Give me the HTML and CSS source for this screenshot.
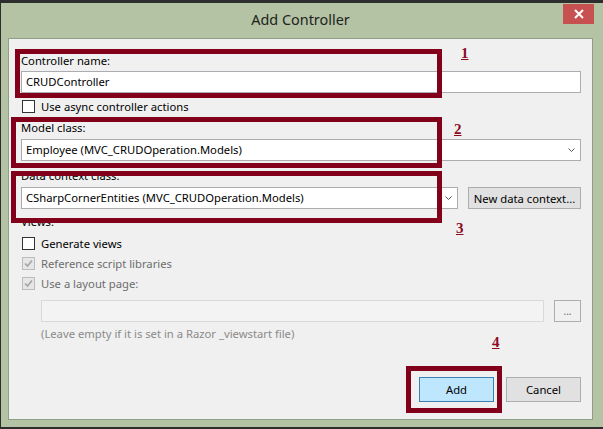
FILE: index.html
```html
<!DOCTYPE html>
<html>
<head>
<meta charset="utf-8">
<link rel="stylesheet" href="styles.css">
</head>
<body>
<div class="window">
  <div class="titlebar">
    <div class="title">Add Controller</div>
    <div class="close"><svg width="12" height="10" viewBox="0 0 12 10"><path d="M2 1 L10 9 M10 1 L2 9" stroke="#fff" stroke-width="2" fill="none"/></svg></div>
  </div>
  <div class="panel">
    <div class="label">Controller name:</div>
    <div class="textbox">CRUDController</div>
    <div class="check"><span class="box"></span><span>Use async controller actions</span></div>
    <div class="label">Model class:</div>
    <div class="combo"><span class="combo-text">Employee (MVC_CRUDOperation.Models)</span><svg class="chev" width="7" height="4" viewBox="0 0 7 4"><path d="M0.5 0.5 L3.5 3.5 L6.5 0.5" stroke="#555" stroke-width="1" fill="none"/></svg></div>
    <div class="label ctx">Data context class:</div>
    <div class="row">
      <div class="combo grow"><span class="combo-text">CSharpCornerEntities (MVC_CRUDOperation.Models)</span><svg class="chev" width="7" height="4" viewBox="0 0 7 4"><path d="M0.5 0.5 L3.5 3.5 L6.5 0.5" stroke="#555" stroke-width="1" fill="none"/></svg></div>
      <div class="btn newctx">New data context...</div>
    </div>
    <div class="label views">Views:</div>
    <div class="check first"><span class="box"></span><span>Generate views</span></div>
    <div class="check disabled"><span class="box"><svg width="11" height="11" viewBox="0 0 11 11"><path d="M2 5.5 L4.5 8 L9 2.5" stroke="#a5a5a5" stroke-width="1.6" fill="none"/></svg></span><span>Reference script libraries</span></div>
    <div class="check disabled"><span class="box"><svg width="11" height="11" viewBox="0 0 11 11"><path d="M2 5.5 L4.5 8 L9 2.5" stroke="#a5a5a5" stroke-width="1.6" fill="none"/></svg></span><span>Use a layout page:</span></div>
    <div class="row indent">
      <div class="textbox disabled grow"></div>
      <div class="btn dots">...</div>
    </div>
    <div class="hint">(Leave empty if it is set in a Razor _viewstart file)</div>
    <div class="actions">
      <div class="btn primary">Add</div>
      <div class="btn">Cancel</div>
    </div>

    <div class="mark m1"></div>
    <div class="mark m2"></div>
    <div class="mark m3"></div>
    <div class="mark m4"></div>
    <div class="num n1">1</div>
    <div class="num n2">2</div>
    <div class="num n3">3</div>
    <div class="num n4">4</div>
  </div>
</div>
</body>
</html>
```

FILE: styles.css
```css
* { box-sizing: border-box; }
html, body { margin: 0; padding: 0; }
body {
  background: #2e2e2e;
  width: 603px;
  height: 429px;
  overflow: hidden;
  font-family: "Noto Sans", "Open Sans", sans-serif;
  font-size: 11.25px;
  color: #000;
}
.window {
  margin: 3px 0 0 1px;
  width: 602px;
  height: 424px;
  background: #b3c3a3;
  padding: 0 10px 0 7px;
  display: flex;
  flex-direction: column;
}
.titlebar {
  height: 35px;
  display: flex;
  justify-content: center;
  position: relative;
}
.title {
  font-size: 14.4px;
  color: #222;
  padding-top: 7px;
  line-height: 20px;
}
.close {
  position: absolute;
  right: -1px;
  top: 1px;
  width: 31px;
  height: 20px;
  background: #c75050;
  display: flex;
  align-items: center;
  justify-content: center;
}
.panel {
  position: relative;
  height: 382px;
  background: #f0f0f0;
  border: 1px solid #8f9e86;
  padding: 14px 11px 0 12px;
  display: flex;
  flex-direction: column;
}
.label {
  line-height: 16px;
  height: 16px;
  white-space: nowrap;
}
.textbox, .combo {
  height: 22px;
  border: 1px solid #abadb3;
  background: #fff;
  margin-top: 2px;
  padding-left: 4px;
  line-height: 20px;
  white-space: nowrap;
  overflow: hidden;
}
.combo {
  margin-top: 3px;
  display: flex;
  align-items: center;
  padding-right: 5px;
  border-color: #acacac;
}
.combo-text { flex: 1; overflow: hidden; }
.chev { flex: none; }
.check {
  display: flex;
  align-items: center;
  height: 13px;
  line-height: 13px;
  margin-top: 7px;
  margin-bottom: 7px;
  margin-left: 1px;
  white-space: nowrap;
}
.check .box {
  width: 13px;
  height: 13px;
  border: 1px solid #333;
  background: #fff;
  margin-right: 6px;
  flex: none;
  display: flex;
  align-items: center;
  justify-content: center;
}
.check.disabled { color: #6d6d6d; margin-top: 7px; margin-bottom: 0; }
.check.disabled .box { border-color: #bcbcbc; background: #e6e6e6; }
.check.first { margin-top: 7px; margin-bottom: 0; }
.ctx { margin-top: 7px; }
.row {
  display: flex;
  margin-top: 3px;
  height: 22px;
}
.row .combo { margin-top: 0; }
.grow { flex: 1; }
.btn {
  border: 1px solid #adadad;
  background: #e1e1e1;
  display: flex;
  align-items: center;
  justify-content: center;
  white-space: nowrap;
}
.newctx { width: 113px; margin-left: 10px; }
.views { margin-top: 5px; }
.indent { margin-top: 10px; margin-left: 20px; }
.textbox.disabled { margin-top: 0; background: #f3f3f3; border-color: #d9d9d9; }
.dots { width: 27px; margin-left: 10px; background: #f0f0f0; color: #666; font-size: 10px; }
.hint { margin-top: 4px; line-height: 16px; color: #8a8a8a; margin-left: 20px; }
.actions {
  display: flex;
  justify-content: flex-end;
  gap: 12px;
  margin-top: 35px;
  height: 25px;
}
.actions .btn { width: 75px; }
.actions .primary { background: #bee6fd; border-color: #3c7fb1; }

.mark {
  position: absolute;
  border: 5px solid #83001a;
}
.m1 { left: 6px; top: 10px; width: 427px; height: 49px; }
.m2 { left: 2px; top: 78px; width: 431px; height: 51px; }
.m3 { left: 2px; top: 132px; width: 431px; height: 52px; }
.m4 { left: 397px; top: 327px; width: 96px; height: 47px; }
.num {
  position: absolute;
  font-family: "Liberation Serif", serif;
  font-weight: bold;
  font-size: 15px;
  line-height: 15px;
  color: #8b0a1e;
  text-decoration: underline;
}
.n1 { left: 452px; top: 7px; }
.n2 { left: 445px; top: 83px; }
.n3 { left: 447px; top: 182px; }
.n4 { left: 483px; top: 296px; }
```
